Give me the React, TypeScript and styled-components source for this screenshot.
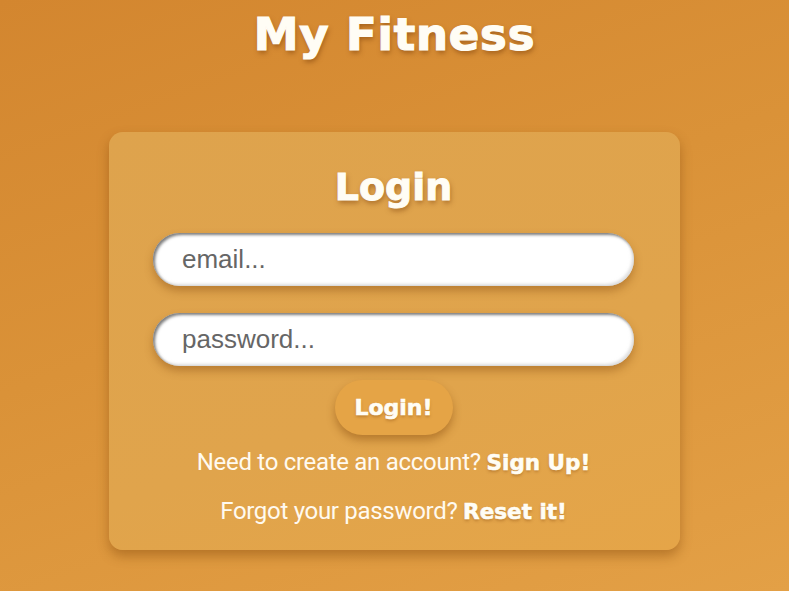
import React from "react";
import styled, { createGlobalStyle } from "styled-components";

const GlobalStyle = createGlobalStyle`
  html, body { margin: 0; padding: 0; }
  body {
    min-height: 591px;
    background: linear-gradient(160deg, #d3862f 0%, #da9238 45%, #e3a046 100%);
    font-family: Roboto, "Liberation Sans", sans-serif;
  }
`;

const Page = styled.main`
  width: 789px;
  height: 591px;
  overflow: hidden;
  display: flex;
  flex-direction: column;
  align-items: center;
  box-sizing: border-box;
`;

const Title = styled.h1`
  margin: 3px 0 0;
  font-family: "DejaVu Sans", Lato, sans-serif;
  font-weight: 700;
  font-size: 45px;
  line-height: 64px;
  color: #fffdf5;
  letter-spacing: 0.8px;
  -webkit-text-stroke: 1.2px #fffdf5;
  text-shadow: 1px 3px 5px rgba(120, 60, 10, 0.55);
`;

const Card = styled.section`
  margin-top: 65px;
  width: 571px;
  height: 418px;
  box-sizing: border-box;
  padding: 30px 46px 0 44px;
  border-radius: 14px;
  background: linear-gradient(160deg, #dea34d 0%, #e0a44c 60%, #e5a548 100%);
  box-shadow: 0 6px 12px rgba(130, 70, 10, 0.45);
  display: flex;
  flex-direction: column;
  align-items: center;
`;

const Heading = styled.h2`
  margin: 0 0 21px;
  font-family: "DejaVu Sans", Lato, sans-serif;
  font-weight: 700;
  font-size: 38px;
  line-height: 50px;
  color: #fffdf5;
  -webkit-text-stroke: 1px #fffdf5;
  text-shadow: 1px 3px 5px rgba(120, 60, 10, 0.5);
`;

const Field = styled.input<{ $gap?: number }>`
  width: 481px;
  height: 53px;
  box-sizing: border-box;
  border: none;
  outline: none;
  border-radius: 27px;
  padding: 0 0 0 29px;
  margin-bottom: ${(p) => p.$gap ?? 0}px;
  background: #ffffff;
  font-family: "Liberation Sans", Arial, sans-serif;
  font-size: 26px;
  color: #555;
  box-shadow: inset 2px 2px 3px rgba(80, 80, 80, 0.75),
    inset -2px -2px 3px rgba(200, 200, 200, 0.6),
    0 5px 8px rgba(140, 80, 20, 0.45);
  &::placeholder { color: #666; }
`;

const Button = styled.button`
  margin-top: 14px;
  width: 118px;
  height: 55px;
  border: none;
  border-radius: 28px;
  background: #e5a446;
  color: #fffdf5;
  font-family: "DejaVu Sans", Lato, sans-serif;
  font-weight: 700;
  font-size: 22px;
  cursor: pointer;
  -webkit-text-stroke: 0.6px #fffdf5;
  text-shadow: 0 2px 3px rgba(120, 60, 10, 0.35);
  box-shadow: 0 5px 8px rgba(130, 70, 10, 0.45);
`;

const Line = styled.p<{ $top: number }>`
  margin: ${(p) => p.$top}px 0 0;
  font-family: Roboto, "Liberation Sans", sans-serif;
  font-size: 24px;
  line-height: 30px;
  color: #fffaf0;
  letter-spacing: -0.3px;
`;

const Link = styled.a`
  font-family: "DejaVu Sans", Lato, sans-serif;
  font-weight: 700;
  font-size: 21.5px;
  color: #fffdf5;
  text-decoration: none;
  letter-spacing: 0;
  -webkit-text-stroke: 0.6px #fffdf5;
  text-shadow: 0 2px 3px rgba(120, 60, 10, 0.35);
`;

export default function App() {
  return (
    <>
      <GlobalStyle />
      <Page>
        <Title>My Fitness</Title>
        <Card>
          <Heading>Login</Heading>
          <Field type="email" placeholder="email..." $gap={27} />
          <Field type="password" placeholder="password..." />
          <Button>Login!</Button>
          <Line $top={12}>
            Need to create an account? <Link href="#">Sign Up!</Link>
          </Line>
          <Line $top={18}>
            Forgot your password? <Link href="#">Reset it!</Link>
          </Line>
        </Card>
      </Page>
    </>
  );
}
